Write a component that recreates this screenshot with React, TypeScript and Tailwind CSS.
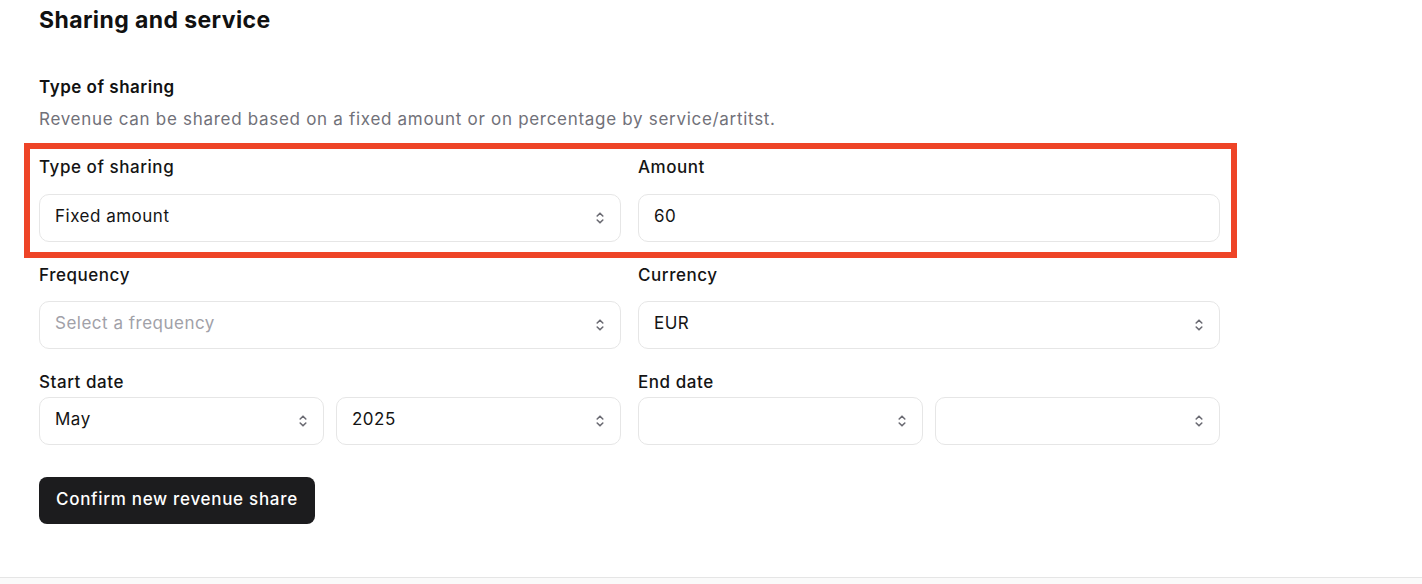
import React from "react";

const Chevrons = () => (
  <svg width="10" height="16" viewBox="0 0 10 16" fill="none" stroke="#6b6b73" strokeWidth="1.6" strokeLinecap="round" strokeLinejoin="round">
    <path d="M2.2 6 L5 3.2 L7.8 6" />
    <path d="M2.2 10 L5 12.8 L7.8 10" />
  </svg>
);

const Select = ({ value, placeholder }: { value?: string; placeholder?: string }) => (
  <div className="flex h-[48px] items-center justify-between rounded-[10px] border border-[#e6e6e6] bg-white pb-[2px] pl-[15px] pr-[15px]">
    <span className={value ? "text-[17px] tracking-[0.5px] text-[#141414]" : "text-[17px] tracking-[0.5px] text-[#a1a1a8]"}>
      {value || placeholder || ""}
    </span>
    <span className="pt-[2px]">
      <Chevrons />
    </span>
  </div>
);

const Label = ({ children }: { children: React.ReactNode }) => (
  <div className="h-[24px] text-[17px] font-medium leading-[24px] tracking-[0.55px] text-[#141414]">{children}</div>
);

export default function App() {
  return (
    <div className="min-h-[584px] w-full bg-[#fafafa]" style={{ fontFamily: "Inter, 'Open Sans', sans-serif" }}>
      <div className="h-[578px] border-b border-[#e5e5e5] bg-white px-[39px] pt-[6px]">
        <h1 className="text-[23px] font-bold leading-[28px] tracking-[0.4px] text-[#111111]">Sharing and service</h1>
        <h2 className="mt-[41px] text-[17px] font-semibold leading-[24px] tracking-[0.5px] text-[#111111]">Type of sharing</h2>
        <p className="mt-[8px] text-[17px] leading-[24px] tracking-[0.7px] text-[#717179]">
          Revenue can be shared based on a fixed amount or on percentage by service/artitst.
        </p>

        <div className="relative mt-[24px] w-[1181px]">
          <div className="pointer-events-none absolute left-[-15px] right-[-17px] top-[-12px] bottom-[-16px] border-[6px] border-[#ee4427]" />
          <div className="grid grid-cols-2 gap-x-[17px]">
            <div>
              <Label>Type of sharing</Label>
              <div className="mt-[15px]">
                <Select value="Fixed amount" />
              </div>
            </div>
            <div>
              <Label>Amount</Label>
              <div className="mt-[15px] flex h-[48px] items-center rounded-[10px] border border-[#e6e6e6] bg-white px-[15px] pb-[2px] text-[17px] tracking-[0.5px] text-[#141414]">
                60
              </div>
            </div>
          </div>
        </div>

        <div className="mt-[21px] grid w-[1181px] grid-cols-2 gap-x-[17px]">
          <div>
            <Label>Frequency</Label>
            <div className="mt-[14px]">
              <Select placeholder="Select a frequency" />
            </div>
          </div>
          <div>
            <Label>Currency</Label>
            <div className="mt-[14px]">
              <Select value="EUR" />
            </div>
          </div>
        </div>

        <div className="mt-[21px] grid w-[1181px] grid-cols-2 gap-x-[17px]">
          <div>
            <Label>Start date</Label>
            <div className="mt-[3px] grid grid-cols-2 gap-x-[12px]">
              <Select value="May" />
              <Select value="2025" />
            </div>
          </div>
          <div>
            <Label>End date</Label>
            <div className="mt-[3px] grid grid-cols-2 gap-x-[12px]">
              <Select />
              <Select />
            </div>
          </div>
        </div>

        <button className="mt-[32px] flex h-[47px] items-center rounded-[8px] bg-[#1c1c1e] px-[17px] pb-[2px] text-[17px] font-medium tracking-[0.7px] text-white">
          Confirm new revenue share
        </button>
      </div>
    </div>
  );
}
